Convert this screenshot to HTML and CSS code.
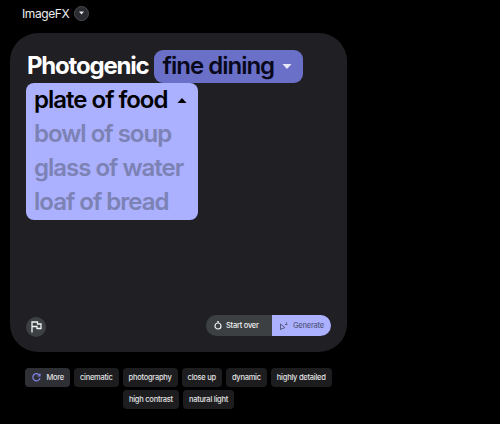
FILE: index.html
```html
<!DOCTYPE html>
<html lang="en">
<head>
<meta charset="utf-8">
<title>ImageFX</title>
<link rel="stylesheet" href="styles.css">
</head>
<body>
<div class="page">
  <header class="top">
    <span class="brand">ImageFX</span>
    <button class="brand-btn"><svg width="7" height="4" viewBox="0 0 7 4"><path d="M1 .5h5L3.500 3.500z" fill="#e8e8ea"/></svg></button>
  </header>
  <main class="card">
    <div class="prompt">
      <div class="line">
        <span class="word">Photogenic</span>
        <span class="chip"><span>fine dining</span><svg class="caret" width="10" height="5" viewBox="0 0 10 5"><path d="M.5 0h9L5 5z" fill="#e8e9f8"/></svg></span>
      </div>
      <div class="menu">
        <div class="opt head"><span>plate of food</span><svg class="caret" width="10" height="5" viewBox="0 0 10 5"><path d="M.5 5h9L5 0z" fill="#000"/></svg></div>
        <div class="opt">bowl of soup</div>
        <div class="opt">glass of water</div>
        <div class="opt">loaf of bread</div>
      </div>
    </div>
    <div class="foot">
      <button class="flag"><svg width="11" height="12" viewBox="0 0 11 12" fill="none" stroke="#f2f2f2" stroke-width="1.300"><path d="M1 11.500V1h5.500v2H10v4.500H6V5.500H1"/></svg></button>
      <div class="actions">
        <button class="act start"><svg width="8" height="9" viewBox="0 0 8 9" fill="none" stroke="#f0f0f0" stroke-width="1.200"><circle cx="4" cy="5" r="3"/><path d="M3 .8h2"/></svg>Start over</button>
        <button class="act gen"><svg width="8" height="8" viewBox="0 0 8 8" fill="none" stroke="#55597f" stroke-width="1"><path d="M.5 2v5.500L5 5.500z"/><path d="M5 2.500h2.500M6.500 .2v1.500"/></svg>Generate</button>
      </div>
    </div>
  </main>
  <div class="tags">
    <button class="tag more"><svg width="9" height="9" viewBox="0 0 9 9" fill="none" stroke="#8284e8" stroke-width="1.200"><path d="M7.600 2.500A3.600 3.600 0 1 0 8 5"/><path d="M8 .5v2.500H5.500"/></svg>More</button>
    <button class="tag">cinematic</button>
    <button class="tag">photography</button>
    <button class="tag">close up</button>
    <button class="tag">dynamic</button>
    <button class="tag">highly detailed</button>
    <button class="tag">high contrast</button>
    <button class="tag">natural light</button>
  </div>
</div>
</body>
</html>
```
FILE: styles.css
```css
* { box-sizing: border-box; }
html, body { margin: 0; padding: 0; height: 100%; background: #000; overflow: hidden; }
body { font-family: Inter, "Noto Sans", sans-serif; color: #e8e8ea; }
button { font-family: inherit; border: 0; padding: 0; cursor: pointer; }
.page { width: 500px; height: 424px; padding: 5px 0 0 10px; }
.top { display: flex; align-items: center; gap: 5px; height: 16px; padding-left: 12px; }
.brand { font-size: 12px; letter-spacing: -0.4px; color: #ededed; }
.brand-btn { display: flex; align-items: center; justify-content: center; width: 15px; height: 15px; border-radius: 50%; background: #2a2b30; border: 1px solid #4a4b50; }
.card { display: flex; flex-direction: column; justify-content: space-between; width: 337px; height: 319px; margin-top: 12px; padding: 16px; background: #202024; border-radius: 28px; }
.prompt { font-size: 24px; font-weight: 600; letter-spacing: -1px; line-height: 34px; white-space: nowrap; }
.line { display: flex; align-items: center; gap: 5px; height: 34px; }
.word { font-weight: 700; color: #fff; padding-left: 1px; letter-spacing: -1.2px; }
.chip { display: flex; align-items: center; justify-content: space-between; width: 149px; height: 33px; padding: 0 11px 0 9px; border-radius: 9px; background: #6a70c8; color: #08081a; }
.menu { width: 172px; height: 137px; padding: 0 8px; background: #abb0ff; border-radius: 8px; color: #7c82b4; }
.opt { height: 34px; }
.head { display: flex; align-items: center; justify-content: space-between; padding-right: 3px; color: #000; }
.foot { display: flex; align-items: center; justify-content: space-between; }
.flag { display: flex; align-items: center; justify-content: center; width: 20px; height: 20px; margin-bottom: -2px; border-radius: 50%; background: #3c4043; }
.actions { display: flex; height: 21px; border-radius: 11px; overflow: hidden; }
.act { display: flex; align-items: center; gap: 4px; font-size: 7.5px; font-weight: 500; letter-spacing: -0.25px; height: 21px; }
.start { width: 66px; padding-left: 8px; background: #3c4043; color: #f0f0f0; }
.gen { width: 59px; padding-left: 8px; gap: 5px; background: #abb0ff; color: #55597f; }
.tags { display: flex; flex-wrap: wrap; justify-content: center; gap: 3px 4px; width: 337px; margin-top: 16px; padding: 0 14px; }
.tag { display: flex; align-items: center; height: 19px; padding: 0 6px; border-radius: 4px; background: #1d1d20; color: #e3e3e3; font-size: 7.5px; font-weight: 500; letter-spacing: -0.25px; white-space: nowrap; }
.more { gap: 5px; padding: 0 6px 0 7px; background: #2f3036; }
```
